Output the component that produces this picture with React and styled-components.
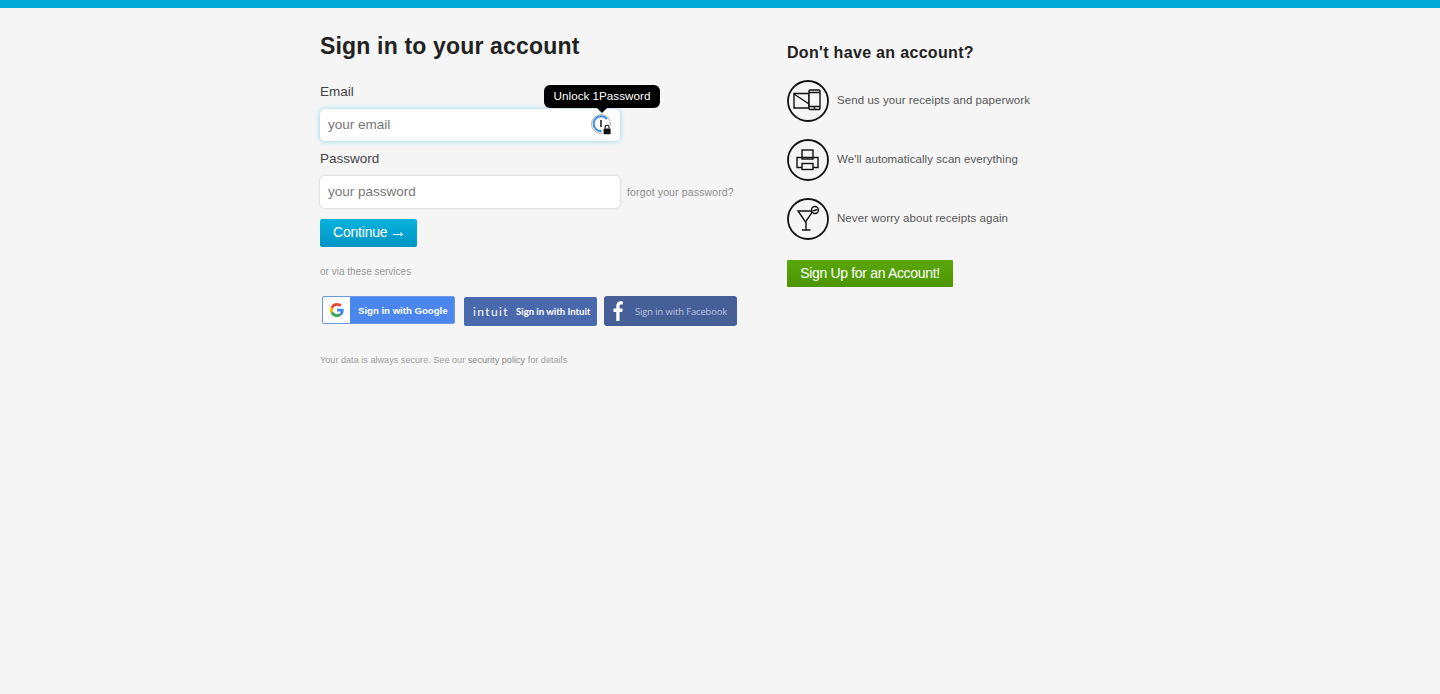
import React from "react";
import styled, { createGlobalStyle } from "styled-components";

const Global = createGlobalStyle`
  html, body { margin: 0; padding: 0; background: #f5f5f5; }
  body { font-family: "Liberation Sans", Arial, sans-serif; color: #333; }
  * { box-sizing: border-box; }
`;
const TopBar = styled.div`height: 8px; background: #00a9d8;`;
const Page = styled.div`
  display: flex; min-height: 686px; padding: 24px 0 0 320px; background: #f5f5f5;
`;
const Left = styled.main`width: 467px; display: flex; flex-direction: column;`;
const Right = styled.aside`width: 300px; padding-top: 11px; display: flex; flex-direction: column;`;
const Title = styled.h1`
  margin: 0; font-size: 23px; line-height: 28px; font-weight: 700; color: #222; letter-spacing: 0.17px;
`;
const SubTitle = styled.h2`
  margin: 0; font-size: 16px; line-height: 20px; font-weight: 700; color: #222; letter-spacing: 0.32px;
`;
const Label = styled.label`
  display: block; font-size: 13.5px; line-height: 16px; color: #444;
  margin-top: ${(p) => p.$top}px; margin-bottom: ${(p) => p.$bottom}px;
`;
const FieldRow = styled.div`display: flex; align-items: center; gap: 7px;`;
const FieldBox = styled.div`position: relative; width: 300px; height: 32px;`;
const Input = styled.input`
  width: 100%; height: 100%; border: none; border-radius: 5px; background: #fff; padding: 0 8px 2px;
  font: 13.5px "Liberation Sans", Arial, sans-serif; color: #333; outline: none;
  box-shadow: ${(p) => p.$focus ? "0 0 4px 1px #a9def0" : "0 0 3px rgba(0,0,0,0.18)"};
  &::placeholder { color: #777; opacity: 1; }
`;
const Forgot = styled.a`font-size: 10.5px; color: #8c8c8c; letter-spacing: 0.14px;`;
const LockBadge = styled.span`
  position: absolute; right: 7px; top: 5px; width: 22px; height: 22px; display: block;
`;
const Tooltip = styled.div`
  position: absolute; left: 224px; top: -24px; width: 116px; height: 23px; border-radius: 6px;
  background: #000; color: #fff; font-size: 11.7px; line-height: 22px; text-align: center;
  &::after {
    content: ""; position: absolute; left: 52px; bottom: -5px; border: 6px solid transparent;
    border-bottom: 0; border-top: 6px solid #000;
  }
`;
const Continue = styled.button`
  display: flex; align-items: center; justify-content: flex-start; gap: 2px;
  margin-top: 11px; width: 97px; height: 28px; border: none; border-radius: 2px;
  background: linear-gradient(#09b3dc, #0093c4); color: #fff; font: 14px/26px "Liberation Sans", Arial, sans-serif;
  padding: 0 0 2px 13px; letter-spacing: -0.2px;
`;
const Arrow = styled.span`font-size: 17px; line-height: 20px;`;
const Via = styled.p`margin: 19px 0 0; font-size: 10px; line-height: 12px; color: #9a9a9a;`;
const Services = styled.div`display: flex; align-items: flex-start; margin-top: 18px; height: 32px;`;
const GoogleBtn = styled.a`
  width: 133px; height: 28px; margin-left: 2px; display: flex; align-items: stretch; border: 1px solid #6d97e8;
  border-radius: 2px; background: #4a86ec; color: #fff; font-size: 9.6px; font-weight: 700; overflow: hidden;
`;
const GoogleIcon = styled.span`
  width: 27px; background: #fff; display: flex; align-items: center; justify-content: center;
`;
const GoogleText = styled.span`align-self: center; margin-left: 8px; white-space: nowrap;`;
const IntuitBtn = styled.a`
  width: 133px; height: 29px; margin-left: 9px; margin-top: 1px; display: flex; align-items: center; padding-left: 9px;
  background: #4a69ac; border-radius: 2px; color: #fff; font: 700 9.5px "Lato", sans-serif; white-space: nowrap;
`;
const IntuitMark = styled.span`
  font: 400 12px "Lato", sans-serif; letter-spacing: 1.4px; margin-right: 7px; text-transform: lowercase;
`;
const FacebookBtn = styled.a`
  width: 133px; height: 30px; margin-left: 7px; display: flex; align-items: center; padding-left: 9px;
  background: #475f97; border-radius: 3px; color: #b9c7e3; font: 9.4px "Open Sans", sans-serif; white-space: nowrap;
  letter-spacing: -0.1px;
`;
const FbText = styled.span`margin-left: 12px;`;
const Secure = styled.p`margin: 27px 0 0; font-size: 9.15px; line-height: 11px; color: #a0a0a0;`;
const SecureLink = styled.a`color: #8a8a8a;`;
const Steps = styled.ul`list-style: none; margin: 17px 0 0; padding: 0; display: flex; flex-direction: column; gap: 17px;`;
const Step = styled.li`
  display: flex; align-items: center; gap: 8px; height: 42px; font-size: 11.5px; color: #555; letter-spacing: 0.07px;
`;
const StepText = styled.span`margin-bottom: 2px;`;
const SignUp = styled.button`
  margin-top: 20px; width: 166px; height: 27px; border: none; border-radius: 1px; padding: 0;
  background: linear-gradient(#5aa80a, #4c9402); color: #fff; font: 14px/27px "Liberation Sans", Arial, sans-serif;
  letter-spacing: -0.33px;
`;

const Circle = ({ children }) => (
  <svg width="42" height="42" viewBox="0 0 42 42" fill="none" stroke="#111" strokeWidth="1.4">
    <circle cx="21" cy="21" r="20" strokeWidth="1.8" />
    {children}
  </svg>
);

export default function App() {
  return (
    <>
      <Global />
      <TopBar />
      <Page>
        <Left>
          <Title>Sign in to your account</Title>
          <Label htmlFor="email" $top={24} $bottom={9}>Email</Label>
          <FieldBox>
            <Input id="email" placeholder="your email" $focus />
            <Tooltip>Unlock 1Password</Tooltip>
            <LockBadge>
              <svg width="22" height="22" viewBox="0 0 22 22" fill="none">
                <circle cx="10" cy="10" r="9.500" stroke="#9a9a9a" strokeWidth="0.8" />
                <path d="M16 5A7.500 7.500 0 1 0 15.500 15" stroke="#3f8edb" strokeWidth="2" />
                <rect x="9.200" y="6" width="1.600" height="7" fill="#222" />
                <circle cx="16" cy="16" r="5.500" fill="#fff" />
                <rect x="12.600" y="14.600" width="7" height="5.600" rx="0.600" fill="#111" />
                <path d="M14.200 14.600v-1.500a1.900 1.900 0 0 1 3.800 0v1.500" stroke="#111" strokeWidth="1.100" />
              </svg>
            </LockBadge>
          </FieldBox>
          <Label htmlFor="password" $top={10} $bottom={9}>Password</Label>
          <FieldRow>
            <FieldBox>
              <Input id="password" placeholder="your password" />
            </FieldBox>
            <Forgot>forgot your password?</Forgot>
          </FieldRow>
          <Continue>Continue <Arrow>→</Arrow></Continue>
          <Via>or via these services</Via>
          <Services>
            <GoogleBtn>
              <GoogleIcon>
                <svg width="14" height="14" viewBox="0 0 48 48">
                  <path fill="#EA4335" d="M24 9.500c3.500 0 6.700 1.200 9.200 3.600l6.900-6.900C35.900 2.400 30.500 0 24 0 14.600 0 6.500 5.400 2.600 13.200l8 6.200C12.400 13.700 17.700 9.500 24 9.500z" />
                  <path fill="#4285F4" d="M47 24.500c0-1.600-.2-3.100-.4-4.500H24v9h13c-.6 3-2.200 5.500-4.700 7.200l7.700 6C44.400 38.600 47 32.100 47 24.500z" />
                  <path fill="#FBBC05" d="M10.500 28.600A14.500 14.500 0 0 1 10.500 19.400l-8-6.200a24 24 0 0 0 0 21.600l8-6.200z" />
                  <path fill="#34A853" d="M24 48c6.500 0 11.900-2.100 15.900-5.800l-7.700-6c-2.100 1.400-4.900 2.300-8.200 2.300-6.300 0-11.600-4.200-13.500-9.900l-8 6.200C6.500 42.600 14.600 48 24 48z" />
                </svg>
              </GoogleIcon>
              <GoogleText>Sign in with Google</GoogleText>
            </GoogleBtn>
            <IntuitBtn>
              <IntuitMark>intuit</IntuitMark>
              Sign in with Intuit
            </IntuitBtn>
            <FacebookBtn>
              <svg width="10" height="20" viewBox="0 0 11 20" fill="#fff" preserveAspectRatio="none">
                <path d="M7.200 20v-9h3l.5-3.500H7.200V5.300c0-1 .3-1.700 1.800-1.700h1.900V.4C10.500.3 9.400.2 8.200.2 5.500.2 3.600 1.800 3.600 4.900v2.600H.5V11h3.100v9z" />
              </svg>
              <FbText>Sign in with Facebook</FbText>
            </FacebookBtn>
          </Services>
          <Secure>Your data is always secure. See our <SecureLink>security policy</SecureLink> for details</Secure>
        </Left>
        <Right>
          <SubTitle>Don't have an account?</SubTitle>
          <Steps>
            <Step>
              <Circle>
                <path d="M7 13.500H22V28H7z" />
                <path d="M7 14l15 10" />
                <rect x="22" y="10" width="11" height="19.500" rx="1" fill="#f5f5f5" />
                <path d="M22 12.500h11M22 26.500h11" />
                <path d="M26.500 28h2" />
              </Circle>
              <StepText>Send us your receipts and paperwork</StepText>
            </Step>
            <Step>
              <Circle>
                <rect x="15" y="11" width="11" height="9" />
                <path d="M15 28.500H10V18.500h21v10h-5" />
                <rect x="15" y="24.500" width="11" height="6" />
              </Circle>
              <StepText>We'll automatically scan everything</StepText>
            </Step>
            <Step>
              <Circle>
                <path d="M11 13h15l-7.500 11z" />
                <path d="M19 24v7.500M15 32h8.500" />
                <circle cx="28" cy="12" r="3.500" fill="#f5f5f5" />
                <path d="M25.500 13l5-1.500" />
              </Circle>
              <StepText>Never worry about receipts again</StepText>
            </Step>
          </Steps>
          <SignUp>Sign Up for an Account!</SignUp>
        </Right>
      </Page>
    </>
  );
}
